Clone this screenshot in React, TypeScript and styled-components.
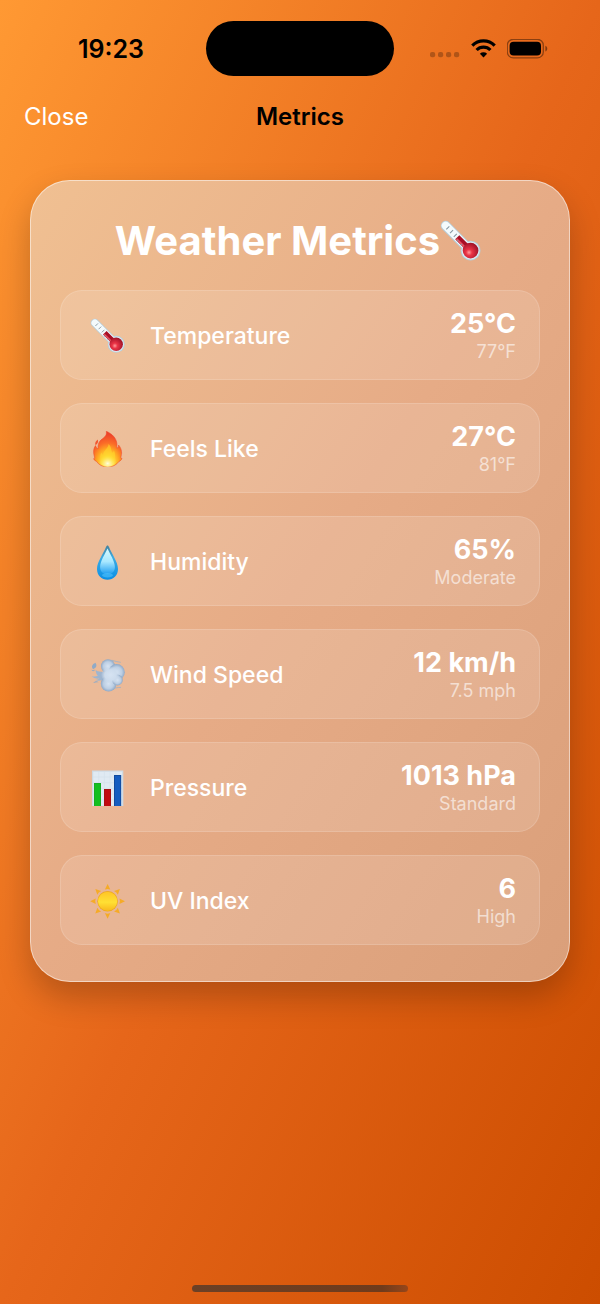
import React, { useId } from 'react';
import styled, { createGlobalStyle } from 'styled-components';

const GlobalStyle = createGlobalStyle`
  *, *::before, *::after { box-sizing: border-box; }
  body {
    margin: 0;
    font-family: Inter, 'Liberation Sans', sans-serif;
    -webkit-font-smoothing: antialiased;
  }
`;

const Screen = styled.div`
  display: flex;
  flex-direction: column;
  min-height: 100vh;
  padding: 21px 0 12px;
  background: linear-gradient(to bottom right, #ff9933, #e6661a 50%, #cc4d00);
`;

const StatusBar = styled.div`
  display: grid;
  grid-template-columns: 1fr 188px 1fr;
  align-items: center;
`;

const Time = styled.time`
  padding-left: 16px;
  font-size: 25px;
  line-height: 32px;
  font-weight: 600;
  text-align: center;
  color: #000;
`;

const Island = styled.div`
  height: 55px;
  border-radius: 28px;
  background: #000;
`;

const StatusIcons = styled.div`
  display: flex;
  justify-content: center;
  align-items: center;
  gap: 11px;
  padding-right: 16px;
`;

const NavBar = styled.header`
  display: grid;
  grid-template-columns: 1fr auto 1fr;
  align-items: center;
  margin-top: 25px;
  padding: 0 24px;
`;

const CloseButton = styled.button`
  justify-self: start;
  padding: 0;
  border: 0;
  background: none;
  font: inherit;
  font-size: 24px;
  line-height: 32px;
  color: #fff;
  cursor: pointer;
`;

const NavTitle = styled.div`
  font-size: 24px;
  line-height: 32px;
  font-weight: 600;
  color: #000;
`;

const Card = styled.main`
  margin: 47px 30px 48px;
  padding: 36px 29px 36px;
  border: 1px solid rgba(255, 255, 255, 0.5);
  border-radius: 40px;
  background: linear-gradient(to bottom right, #f0c092, #e6ab86 50%, #da9f7a) border-box;
  box-shadow: 0 15px 32px rgba(0, 0, 0, 0.22);
`;

const CardTitle = styled.h1`
  display: flex;
  justify-content: center;
  align-items: center;
  margin: 0 0 25px;
  padding-right: 3px;
  font-size: 40px;
  line-height: 48px;
  font-weight: 700;
  color: #fff;
`;

const MetricList = styled.ul`
  display: flex;
  flex-direction: column;
  gap: 23px;
  margin: 0;
  padding: 0;
  list-style: none;
`;

const MetricRow = styled.li`
  display: flex;
  align-items: center;
  gap: 24px;
  padding: 17px 23px 16px 29px;
  border: 1px solid rgba(255, 255, 255, 0.14);
  border-radius: 22px;
  background: rgba(255, 255, 255, 0.13);
`;

const Icon = styled.svg<{ $size: number }>`
  flex: none;
  display: block;
  width: ${(p) => p.$size}px;
  height: ${(p) => p.$size}px;
`;

const MetricName = styled.span`
  flex: 1;
  font-size: 23px;
  line-height: 32px;
  font-weight: 500;
  color: #fff;
`;

const Reading = styled.div`
  display: flex;
  flex-direction: column;
  text-align: right;
`;

const Value = styled.strong`
  font-size: 27px;
  line-height: 32px;
  font-weight: 700;
  color: #fff;
`;

const Detail = styled.span`
  font-size: 18px;
  line-height: 23px;
  color: rgba(255, 255, 255, 0.6);
`;

const HomeIndicator = styled.div`
  width: 36%;
  height: 7px;
  margin: auto auto 0;
  border-radius: 4px;
  background: linear-gradient(to right, #6b4026, #6f3b1c 88%, #96461a);
`;

type IconProps = { size?: number };

function Thermometer({ size = 36 }: IconProps) {
  const bulb = useId();
  return (
    <Icon $size={size} viewBox="0 0 36 36" aria-hidden="true">
      <defs>
        <radialGradient id={bulb} cx="0.4" cy="0.62" r="0.65">
          <stop offset="0" stopColor="#ff9a9a" />
          <stop offset="0.3" stopColor="#ea3446" />
          <stop offset="1" stopColor="#9c1026" />
        </radialGradient>
      </defs>
      <path d="M4.900 4.900 25 25" stroke="#b5cdda" strokeWidth="8.400" strokeLinecap="round" />
      <circle cx="26.200" cy="26.200" r="8.500" fill="#b5cdda" />
      <path d="M4.900 4.900 25 25" stroke="#f4fafc" strokeWidth="6.900" strokeLinecap="round" />
      <circle cx="26.200" cy="26.200" r="7.700" fill="#dcebf2" />
      <path d="m14.800 14.800 9 9" stroke="#a80f26" strokeWidth="5" />
      <path d="m14.200 16.200 7.600 7.600" stroke="#e65260" strokeWidth="1.600" />
      <circle cx="26.200" cy="26.200" r="6.700" fill={`url(#${bulb})`} />
      <path d="m8 5.400-2.600 2.600M11.200 8.600 8.600 11.200M14.400 11.800l-2.600 2.600M15.600 17.400l-1 1M18.800 20.600l-1 1" stroke="#8496a1" strokeWidth="0.900" />
    </Icon>
  );
}

function Flame() {
  return (
    <Icon $size={36} viewBox="0 0 36 36" aria-hidden="true">
      <defs>
        <radialGradient id="flame" cx="0.5" cy="0.88" r="0.8">
          <stop offset="0" stopColor="#fff9a8" />
          <stop offset="0.22" stopColor="#ffe23c" />
          <stop offset="0.48" stopColor="#ffa822" />
          <stop offset="0.7" stopColor="#fb6c27" />
          <stop offset="1" stopColor="#ee4429" />
        </radialGradient>
        <radialGradient id="core" cx="0.5" cy="0.75" r="0.6">
          <stop offset="0" stopColor="#fffde0" />
          <stop offset="1" stopColor="#ffe22e" stopOpacity="0" />
        </radialGradient>
      </defs>
      <path
        d="M16.300 0.300c5.600 2.300 10.300 7 10.600 12.700.1 1.700-.2 2.900 0 4.100 1.300-.3 1.800-1.400 1.700-3 2.600 3 3.700 7 2.500 11-.4 1.800-.2 2.600.9 2.300-.6 1.600-1.700 2.500-3 3-2.400 3.400-6.200 5.500-11.100 5.500-5.300 0-9.100-2-11.400-5.500-1.300-.5-2.400-1.400-2.900-2.700.9.200 1.200-.3.900-1.700-1.500-4.600-1.100-8.600 1-11.400.6 1.900 1.400 2.800 2.600 3.200-.2-2.600.1-5.600 1.900-7.800C12.600 6.800 17.300 6 16.300.3Z"
        fill="url(#flame)"
        stroke="#ee482b"
        strokeOpacity="0.700"
        strokeWidth="0.800"
      />
      <path d="M7.800 8.400c.8 2.300-.2 4.300-2.200 5.800-1.200-2.500.4-4.400 2.200-5.800Z" fill="#f2562f" />
      <path d="M18.600 13c3.200 3.100 2.200 6.400 3.600 8.700 1-.5 1.500-1.300 1.700-2.400 2.800 6.200 1 14.600-6.100 14.600-7.400 0-9.300-7.300-6.400-12.300.5 1.400 1 2.100 2 2.500-.6-4.300 4.700-6 5.200-11.100Z" fill="#ffd52c" fillOpacity="0.600" />
      <ellipse cx="17.700" cy="29" rx="8.500" ry="7" fill="url(#core)" />
    </Icon>
  );
}

function Droplet() {
  return (
    <Icon $size={36} viewBox="0 0 36 36" aria-hidden="true">
      <defs>
        <linearGradient id="water" x1="0" y1="0" x2="0" y2="1">
          <stop offset="0" stopColor="#47819c" />
          <stop offset="0.35" stopColor="#3cabe2" />
          <stop offset="1" stopColor="#0a8fe6" />
        </linearGradient>
        <linearGradient id="shine" x1="0" y1="0" x2="0" y2="1">
          <stop offset="0" stopColor="#d8fbff" />
          <stop offset="0.5" stopColor="#a9e8ff" />
          <stop offset="1" stopColor="#1c9df0" />
        </linearGradient>
      </defs>
      <path d="M17.500 1.500c.7 0 1.100.7 1.500 1.600 2.400 6.300 9 14.800 9 21.800 0 6.400-4.600 10.800-10.500 10.800S7 31.300 7 24.900C7 17.900 13.600 9.400 16 3.100c.4-.9.800-1.600 1.500-1.600Z" fill="url(#water)" />
      <path d="M17.500 4.500c2.300 5.400 7.400 12.700 7.400 18.500 0 4.700-3.300 7.500-7.400 7.500s-7.400-2.800-7.400-7.500c0-5.800 5.100-13.100 7.400-18.500Z" fill="url(#shine)" />
      <ellipse cx="17.500" cy="31.300" rx="5.500" ry="2.200" fill="#5cc9ff" fillOpacity="0.500" />
    </Icon>
  );
}

function Wind() {
  return (
    <Icon $size={36} viewBox="0 0 36 36" aria-hidden="true">
      <defs>
        <radialGradient id="puff" cx="0.5" cy="0.5" r="0.5">
          <stop offset="0" stopColor="#d6e3f2" />
          <stop offset="0.65" stopColor="#bccee3" />
          <stop offset="1" stopColor="#8fa9c7" />
        </radialGradient>
        <radialGradient id="mist" cx="0.5" cy="0.5" r="0.5">
          <stop offset="0" stopColor="#d6e3f2" />
          <stop offset="0.6" stopColor="#cddced" />
          <stop offset="1" stopColor="#cddced" stopOpacity="0" />
        </radialGradient>
      </defs>
      <path d="M22 3.300c3 .8 5.300 1.700 8.400 2M23 31c2.500.500 4.500-.8 7.600-.6" fill="none" stroke="#a4b2c3" strokeWidth="0.900" strokeLinecap="round" />
      <path d="M5.600 12.800c2 2.200 5.400 2 8.900 1.600v8.400c-3 .6-6.400 1.600-9.300.2 1.900 0 3.400-.5 4.300-1.400-2.900.5-5.900-.4-7.900-2.300 2.600.6 4.900.3 6.300-.5-1.300-1.300-2.200-3.400-2.300-6Z" fill="#9fb5cf" />
      <circle cx="18" cy="9.300" r="7" fill="url(#puff)" />
      <circle cx="18.600" cy="26.700" r="7.800" fill="url(#puff)" />
      <circle cx="26.600" cy="15.300" r="8.200" fill="url(#puff)" />
      <circle cx="27.400" cy="23" r="5.400" fill="url(#puff)" />
      <ellipse cx="20.500" cy="18" rx="9.500" ry="8.800" fill="url(#mist)" />
      <path d="M5.400 5.800c1.900 2.700 1.100 5.100-2.300 6.400-2-2.200-1.200-4.800 2.300-6.400ZM1.400 12.600c1 .9 2.400 1 3.500 0-.3 2.200-2.700 2.400-3.500 0ZM3.200 26c1.600-2 3.900-2.300 5.500-.6-1.800-.3-3.500.2-5.500.6Z" fill="#8faac7" />
    </Icon>
  );
}

function BarChart() {
  return (
    <Icon $size={36} viewBox="0 0 36 36" aria-hidden="true">
      <rect x="2" y="0.500" width="31.300" height="35.500" fill="#cddae4" />
      <rect x="3.200" y="1.700" width="28.900" height="34" fill="#e0eaf3" />
      <path d="M3 7h29M3 12.700h29M3 18.400h29M3 24.100h29M3 29.800h29M8.700 2v34M14.400 2v34M20.100 2v34M25.800 2v34" stroke="#d3e0eb" strokeWidth="0.600" />
      <rect x="4" y="13" width="7" height="23" fill="#15ad23" />
      <rect x="5" y="14" width="5" height="22" fill="#12bf20" />
      <rect x="14" y="19" width="7" height="17" fill="#a80f14" />
      <rect x="15" y="20" width="5" height="16" fill="#c10b10" />
      <rect x="24" y="5" width="7.200" height="31" fill="#114b9e" />
      <rect x="25" y="6" width="5.200" height="30" fill="#145cc0" />
    </Icon>
  );
}

function Sun() {
  return (
    <Icon $size={36} viewBox="0 0 36 36" aria-hidden="true">
      <defs>
        <linearGradient id="sun" x1="0" y1="0" x2="0" y2="1">
          <stop offset="0" stopColor="#ffc526" />
          <stop offset="0.550" stopColor="#ffe034" />
          <stop offset="1" stopColor="#f9b81d" />
        </linearGradient>
      </defs>
      {[0, 45, 90, 135, 180, 225, 270, 315].map((angle) => (
        <path key={angle} d="M17.600 0.900 20.300 6.500q-2.700-1.200-5.400 0Z" fill="#f5ab27" transform={`rotate(${angle} 17.600 18.300)`} />
      ))}
      <circle cx="17.600" cy="18.300" r="10.300" fill="#eda61e" />
      <circle cx="17.600" cy="18.300" r="9.600" fill="url(#sun)" />
    </Icon>
  );
}

const metrics = [
  { icon: <Thermometer />, name: 'Temperature', value: '25°C', detail: '77°F' },
  { icon: <Flame />, name: 'Feels Like', value: '27°C', detail: '81°F' },
  { icon: <Droplet />, name: 'Humidity', value: '65%', detail: 'Moderate' },
  { icon: <Wind />, name: 'Wind Speed', value: '12 km/h', detail: '7.5 mph' },
  { icon: <BarChart />, name: 'Pressure', value: '1013 hPa', detail: 'Standard' },
  { icon: <Sun />, name: 'UV Index', value: '6', detail: 'High' },
];

export default function App() {
  return (
    <>
      <GlobalStyle />
      <Screen>
        <StatusBar>
          <Time>19:23</Time>
          <Island />
          <StatusIcons>
            <svg width="30" height="20" viewBox="0 0 30 20" aria-hidden="true">
              <g fill="#000" fillOpacity="0.250">
                <rect x="0" y="13" width="5.200" height="5.200" rx="2" />
                <rect x="8" y="13" width="5.200" height="5.200" rx="2" />
                <rect x="16" y="13" width="5.200" height="5.200" rx="2" />
                <rect x="24" y="13" width="5.200" height="5.200" rx="2" />
              </g>
            </svg>
            <svg width="25" height="20" viewBox="0 0 25 20" aria-hidden="true">
              <g fill="none" stroke="#000" strokeWidth="3.200">
                <path d="M1.300 6.600a15.800 15.800 0 0 1 22.400 0" />
                <path d="M5.600 11a9.700 9.700 0 0 1 13.800 0" />
              </g>
              <path d="M12.500 18.400 8.900 14.700a5.200 5.200 0 0 1 7.200 0Z" fill="#000" />
            </svg>
            <svg width="41" height="20" viewBox="0 0 41 20" aria-hidden="true">
              <rect x="0.300" y="0.300" width="36" height="18.600" rx="6" fill="none" stroke="#000" strokeOpacity="0.400" strokeWidth="1.300" />
              <rect x="2.600" y="2.700" width="31.400" height="13.800" rx="4" fill="#000" />
              <path d="M38.400 6.700c2.500 1 2.500 4.800 0 5.800Z" fill="#000" fillOpacity="0.450" />
            </svg>
          </StatusIcons>
        </StatusBar>
        <NavBar>
          <CloseButton type="button">Close</CloseButton>
          <NavTitle>Metrics</NavTitle>
        </NavBar>
        <Card>
          <CardTitle>
            Weather Metrics
            <Thermometer size={42} />
          </CardTitle>
          <MetricList>
            {metrics.map((m) => (
              <MetricRow key={m.name}>
                {m.icon}
                <MetricName>{m.name}</MetricName>
                <Reading>
                  <Value>{m.value}</Value>
                  <Detail>{m.detail}</Detail>
                </Reading>
              </MetricRow>
            ))}
          </MetricList>
        </Card>
        <HomeIndicator />
      </Screen>
    </>
  );
}
